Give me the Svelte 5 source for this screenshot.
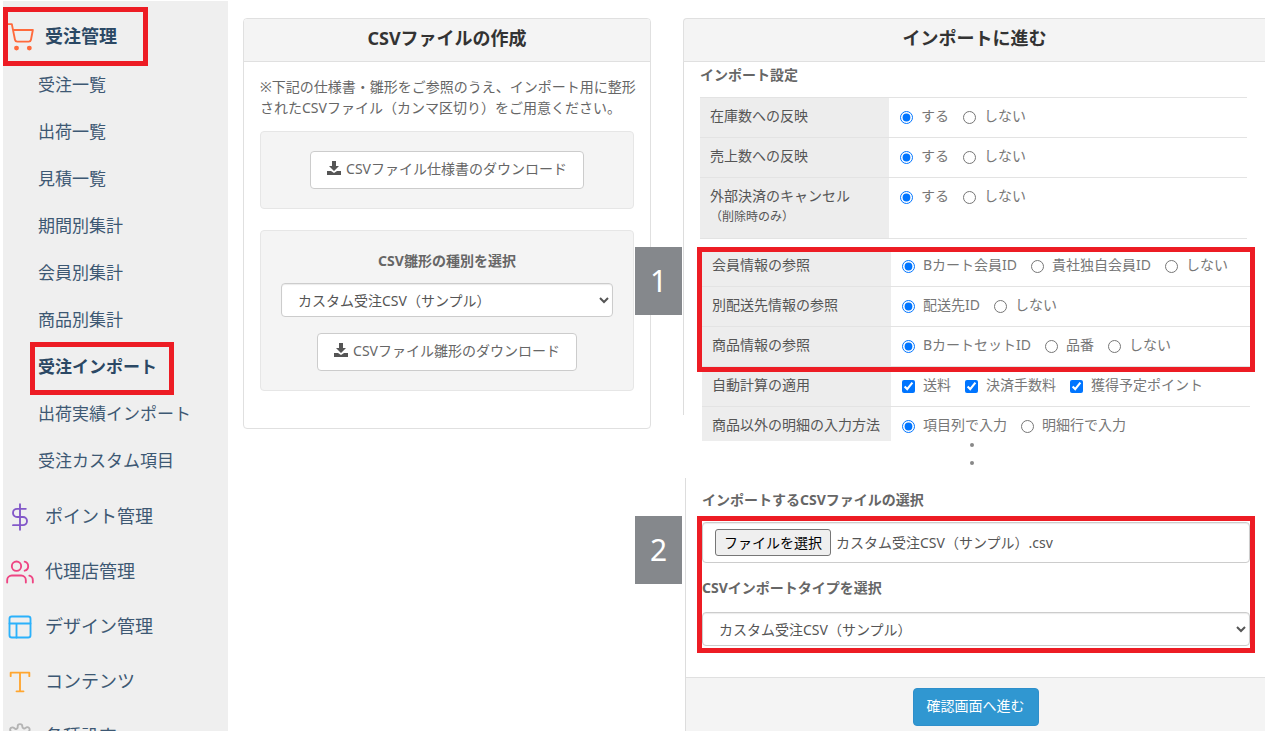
<script lang="ts">
  const orderMenu = [
    "受注一覧",
    "出荷一覧",
    "見積一覧",
    "期間別集計",
    "会員別集計",
    "商品別集計",
    "受注インポート",
    "出荷実績インポート",
    "受注カスタム項目",
  ];
  const current = "受注インポート";

  const groups = [
    { name: "ポイント管理", icon: "dollar" },
    { name: "代理店管理", icon: "users" },
    { name: "デザイン管理", icon: "layout" },
    { name: "コンテンツ", icon: "type" },
    { name: "各種設定", icon: "gear" },
  ];

  const basic = [
    { id: "stock", title: "在庫数への反映", options: ["する", "しない"] },
    { id: "sales", title: "売上数への反映", options: ["する", "しない"] },
    { id: "cancel", title: "外部決済のキャンセル", note: "（削除時のみ）", options: ["する", "しない"] },
  ];
  const lookup = [
    { id: "member", title: "会員情報の参照", options: ["Bカート会員ID", "貴社独自会員ID", "しない"] },
    { id: "address", title: "別配送先情報の参照", options: ["配送先ID", "しない"] },
    { id: "product", title: "商品情報の参照", options: ["BカートセットID", "品番", "しない"] },
  ];
  const detail = [
    { id: "calc", title: "自動計算の適用", check: true, options: ["送料", "決済手数料", "獲得予定ポイント"] },
    { id: "lines", title: "商品以外の明細の入力方法", options: ["項目列で入力", "明細行で入力"] },
  ];

  let fileName = $state("カスタム受注CSV（サンプル）.csv");

  function handleFile(event) {
    const file = event.target.files[0];
    if (file) fileName = file.name;
  }
</script>

{#snippet icon(name)}
  <svg class="icon {name}" viewBox="0 0 24 24" aria-hidden="true">
    {#if name === "cart"}
      <circle class="dot" cx="9" cy="21.5" r="1.3" />
      <circle class="dot" cx="20" cy="21.5" r="1.3" />
      <path d="M1 1h4l2.68 13.39a2 2 0 0 0 2 1.61h9.72a2 2 0 0 0 2-1.61L23 6H6" />
    {:else if name === "dollar"}
      <path d="M12 1v22M17 5H9.5a3.5 3.5 0 0 0 0 7h5a3.5 3.5 0 0 1 0 7H6" />
    {:else if name === "users"}
      <path d="M17 21v-2a4 4 0 0 0-4-4H5a4 4 0 0 0-4 4v2" />
      <circle cx="9" cy="7" r="4" />
      <path d="M23 21v-2a4 4 0 0 0-3-3.87M16 3.13a4 4 0 0 1 0 7.75" />
    {:else if name === "layout"}
      <rect x="3" y="3" width="18" height="18" rx="2" />
      <path d="M3 9h18M9 21V9" />
    {:else if name === "type"}
      <path d="M4 7V4h16v3M9 20h6M12 4v16" />
    {:else}
      <circle cx="12" cy="12" r="3" />
      <path d="M19.4 15a1.65 1.65 0 0 0 .33 1.82l.06.06a2 2 0 1 1-2.83 2.83l-.06-.06a1.65 1.65 0 0 0-2.8 1.17V21a2 2 0 0 1-4 0v-.09a1.65 1.65 0 0 0-2.9-1.08l-.06.06a2 2 0 1 1-2.83-2.83l.06-.06A1.65 1.65 0 0 0 3.1 14H3a2 2 0 0 1 0-4h.09a1.65 1.65 0 0 0 1.1-2.8l-.06-.06a2 2 0 1 1 2.83-2.83l.06.06A1.65 1.65 0 0 0 10 3.1V3a2 2 0 0 1 4 0v.09a1.65 1.65 0 0 0 2.8 1.1l.06-.06a2 2 0 1 1 2.83 2.83l-.06.06A1.65 1.65 0 0 0 20.9 10H21a2 2 0 0 1 0 4h-.09a1.65 1.65 0 0 0-1.51 1z" />
    {/if}
  </svg>
{/snippet}

{#snippet download()}
  <svg class="download" viewBox="0 0 14 14" aria-hidden="true">
    <path d="M5 0h4v5h3L7 10 2 5h3zM0 10h4l3 2 3-2h4v4H0z" />
  </svg>
{/snippet}

{#snippet settings(rows)}
  <table>
    <tbody>
      {#each rows as row}
        <tr>
          <th scope="row">
            {row.title}
            {#if row.note}<small>{row.note}</small>{/if}
          </th>
          <td>
            <div class="options">
              {#each row.options as option, i}
                <label>
                  {#if row.check}
                    <input type="checkbox" name={row.id} value={option} checked />
                  {:else}
                    <input type="radio" name={row.id} value={option} checked={i === 0} />
                  {/if}
                  {option}
                </label>
              {/each}
            </div>
          </td>
        </tr>
      {/each}
    </tbody>
  </table>
{/snippet}

<div class="page">
  <nav class="sidebar">
    <a href="#orders" class="group active marked">{@render icon("cart")}受注管理</a>
    <ul>
      {#each orderMenu as item}
        <li>
          <a href="#orders" class:active={item === current} class:marked={item === current}>{item}</a>
        </li>
      {/each}
    </ul>
    {#each groups as group}
      <a href="#{group.icon}" class="group">{@render icon(group.icon)}{group.name}</a>
    {/each}
  </nav>

  <main>
    <section class="card">
      <h2>CSVファイルの作成</h2>
      <div class="card-body">
        <p>※下記の仕様書・雛形をご参照のうえ、インポート用に整形<br />されたCSVファイル（カンマ区切り）をご用意ください。</p>
        <div class="well">
          <button class="btn" type="button">{@render download()}CSVファイル仕様書のダウンロード</button>
        </div>
        <div class="well">
          <label class="title" for="template">CSV雛形の種別を選択</label>
          <select id="template">
            <option>カスタム受注CSV（サンプル）</option>
          </select>
          <button class="btn" type="button">{@render download()}CSVファイル雛形のダウンロード</button>
        </div>
      </div>
    </section>

    <section class="import">
      <h2>インポートに進む</h2>
      <div class="upper">
        <h3 class="title">インポート設定</h3>
        <div class="basic">{@render settings(basic)}</div>
        <div class="lookup marked">
          <span class="step">1</span>
          {@render settings(lookup)}
        </div>
        <div class="detail">{@render settings(detail)}</div>
      </div>
      <div class="more"><i></i><i></i></div>
      <div class="lower">
        <h3 class="title">インポートするCSVファイルの選択</h3>
        <div class="upload marked">
          <span class="step">2</span>
          <label class="file">
            <input type="file" accept=".csv" onchange={handleFile} />
            <span class="choose">ファイルを選択</span>
            {fileName}
          </label>
          <label class="title" for="kind">CSVインポートタイプを選択</label>
          <select id="kind">
            <option>カスタム受注CSV（サンプル）</option>
          </select>
        </div>
        <footer>
          <button class="btn primary" type="button">確認画面へ進む</button>
        </footer>
      </div>
    </section>
  </main>
</div>

<style>
  :global(body) {
    background: #fff;
    color: #666;
    font: 14px/21px "Noto Sans", "Noto Sans CJK JP", sans-serif;
  }
  .page {
    display: flex;
    height: 100vh;
    overflow: hidden;
  }
  .marked {
    outline: 5px solid #ed1c24;
  }

  /* sidebar */
  .sidebar {
    box-sizing: border-box;
    flex: 0 0 225px;
    margin: 1px 0 0 3px;
    padding: 11px 0 0 5px;
    background: #efefef;
  }
  .sidebar a {
    color: #3d5873;
    text-decoration: none;
    white-space: nowrap;
  }
  .sidebar a.active {
    color: #2b4864;
    font-weight: bold;
  }
  .group {
    display: flex;
    align-items: center;
    gap: 11px;
    height: 49px;
    margin-bottom: 6px;
    font-size: 18px;
  }
  .group.marked {
    width: 135px;
    margin: 0;
  }
  .sidebar ul {
    margin: 0 0 8px;
    padding: 0 0 0 27px;
    list-style: none;
    font-size: 17px;
  }
  .sidebar li {
    display: flex;
    align-items: flex-end;
    height: 47px;
  }
  .sidebar li a {
    padding: 0 12px 4px 3px;
    line-height: 39px;
  }
  .icon {
    width: 28px;
    height: 28px;
    margin-left: -2px;
    overflow: visible;
    fill: none;
    stroke: currentColor;
    stroke-width: 1.6;
    stroke-linecap: round;
    stroke-linejoin: round;
  }
  .icon .dot {
    fill: currentColor;
  }
  .cart { color: #ff6a3c; }
  .dollar { color: #8358c9; }
  .users { color: #ee4583; }
  .layout { color: #2bb1fb; }
  .type { color: #ffa630; }
  .gear { color: #b4b4b4; }

  /* content */
  main {
    flex: 1;
    display: grid;
    grid-template-columns: 408fr 582fr;
    align-items: start;
    gap: 32px;
    min-width: 0;
    padding: 18px 0 0 15px;
  }
  h2 {
    margin: 0;
    padding: 6px 0 9px;
    border-bottom: 1px solid #e0e0e0;
    background: #f4f4f4;
    color: #333;
    font-size: 18px;
    line-height: 27px;
    text-align: center;
  }
  .title {
    margin: 0;
    font-size: 14px;
    font-weight: bold;
  }
  .card {
    border: 1px solid #e0e0e0;
    border-radius: 4px;
    overflow: hidden;
  }
  .card-body {
    padding: 14px 16px 37px;
  }
  p {
    margin: 0 0 13px;
    white-space: nowrap;
  }
  .well {
    display: flex;
    flex-direction: column;
    align-items: center;
    padding: 19px 20px;
    border: 1px solid #e6e6e6;
    border-radius: 4px;
    background: #f4f4f4;
  }
  .well + .well {
    margin-top: 21px;
  }
  .well select {
    margin: 12px 0 16px;
  }
  select {
    width: 100%;
    height: 34px;
    padding: 0 12px;
    border: 1px solid #ccc;
    border-radius: 4px;
    background-color: #fff;
    box-shadow: inset 0 1px 1px rgba(0, 0, 0, 0.08);
    color: #555;
    font: inherit;
  }
  .btn {
    display: flex;
    align-items: center;
    gap: 5px;
    height: 38px;
    padding: 0 16px 4px;
    border: 1px solid #ccc;
    border-radius: 4px;
    background: #fff;
    color: #666;
    font: inherit;
    white-space: nowrap;
  }
  .primary {
    padding: 0 13px 4px;
    border-color: #2e8fcb;
    background: #3097d1;
    color: #fff;
  }
  .download {
    width: 14px;
    height: 14px;
    fill: #555;
  }

  /* import panel */
  .import {
    min-width: 0;
  }
  .import h2 {
    border: 1px solid #e0e0e0;
    border-right: 0;
    border-radius: 4px 0 0;
  }
  .upper {
    padding: 2px 15px 0 19px;
    background: linear-gradient(#ddd, #ddd) no-repeat left top / 1px calc(100% - 26px);
  }
  .upper .title {
    margin: 0 0 12px -2px;
  }
  .basic {
    margin: 0 3px 13px -2px;
    border-top: 1px solid #e3e3e3;
  }
  table {
    width: 100%;
    border-collapse: separate;
    border-spacing: 0;
    table-layout: fixed;
  }
  th,
  td {
    padding: 7px 10px 11px;
    border-bottom: 1px solid #e3e3e3;
    text-align: left;
    vertical-align: top;
  }
  th {
    box-sizing: border-box;
    width: 189px;
    padding-right: 0;
    background: #ededed;
    color: #555;
    font-weight: normal;
    white-space: nowrap;
  }
  small {
    display: block;
    font-size: 12px;
  }
  .lookup,
  .upload {
    position: relative;
  }
  .lookup tr:first-child :is(th, td) {
    padding-top: 2px;
  }
  .detail tr:last-child :is(th, td) {
    padding-bottom: 6px;
    border: 0;
  }
  .options {
    display: flex;
    gap: 13px;
    color: #777;
    white-space: nowrap;
  }
  .options label {
    display: flex;
    align-items: center;
    gap: 8px;
  }
  .options input {
    width: 13px;
    height: 13px;
    margin: 3px 0 0 1px;
  }
  .step {
    position: absolute;
    top: -5px;
    left: -67px;
    width: 47px;
    background: #85888c;
    color: #fff;
    font-size: 30px;
    line-height: 68px;
    text-align: center;
  }
  .more {
    display: flex;
    flex-direction: column;
    align-items: center;
    gap: 14px;
    padding: 2px 4px 13px 0;
  }
  .more i {
    width: 4px;
    height: 4px;
    border-radius: 50%;
    background: #888;
  }
  .lower {
    margin-left: 2px;
    border-left: 1px solid #ddd;
  }
  .lower > .title {
    padding: 11px 16px;
  }
  .upload {
    margin: 0 15px 0 16px;
    padding: 1px 0 2px;
  }
  .upload .title {
    display: block;
    margin: 14px 0;
  }
  .upload select {
    display: block;
  }
  .file {
    display: flex;
    align-items: center;
    gap: 5px;
    padding: 6px 12px;
    border: 1px solid #ccc;
    border-radius: 4px;
    box-shadow: inset 0 1px 1px rgba(0, 0, 0, 0.08);
    color: #555;
  }
  .file input {
    position: absolute;
    width: 1px;
    height: 1px;
    opacity: 0;
  }
  .choose {
    padding: 2px 8px;
    border: 1px solid #767676;
    border-radius: 3px;
    background: #efefef;
    color: #000;
  }
  footer {
    display: flex;
    justify-content: center;
    margin-top: 29px;
    padding: 10px 0;
    border-top: 1px solid #e0e0e0;
    background: #f4f4f4;
  }
</style>
